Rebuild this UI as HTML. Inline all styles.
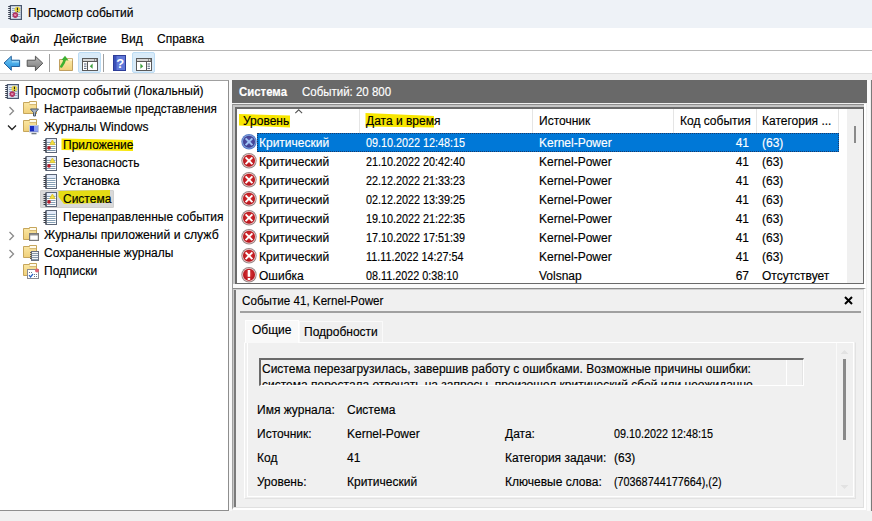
<!DOCTYPE html>
<html><head><meta charset="utf-8">
<style>
*{margin:0;padding:0;box-sizing:border-box}
html,body{width:872px;height:521px;overflow:hidden;background:#f0f0f0;font-family:"Liberation Sans",sans-serif;font-size:12px;color:#000}
.t,.r span{-webkit-text-stroke:0.15px currentColor}
.a{position:absolute}
.t{position:absolute;white-space:nowrap;line-height:18px;height:18px}
.r{position:absolute;left:0;width:872px;height:19px}
.r span{position:absolute;top:1px;line-height:19px;white-space:nowrap}
.d{display:inline-block;transform:scaleX(0.9);transform-origin:0 0}
svg.a{overflow:visible}
</style></head><body>
<svg width="0" height="0" style="position:absolute">
<defs>
<linearGradient id="gfold" x1="0" y1="0" x2="0" y2="1"><stop offset="0" stop-color="#fbe8a6"/><stop offset="1" stop-color="#f0d07a"/></linearGradient>
<radialGradient id="gred" cx="0.5" cy="0.45" r="0.55"><stop offset="0" stop-color="#e23a3a"/><stop offset="1" stop-color="#b01018"/></radialGradient>
<radialGradient id="gblu" cx="0.5" cy="0.45" r="0.55"><stop offset="0" stop-color="#5a58b0"/><stop offset="1" stop-color="#3a3c8c"/></radialGradient>
<linearGradient id="gback" x1="0" y1="0" x2="0" y2="1"><stop offset="0" stop-color="#7cd0f8"/><stop offset="1" stop-color="#1c8ad8"/></linearGradient>
<linearGradient id="gfwd" x1="0" y1="0" x2="0" y2="1"><stop offset="0" stop-color="#b8b8b8"/><stop offset="1" stop-color="#7a7a7a"/></linearGradient>
<g id="icrit"><circle cx="8" cy="7.7" r="7.7" fill="#9a8888"/><circle cx="8" cy="7.7" r="6.8" fill="#f2cccc"/><circle cx="8" cy="7.7" r="6" fill="url(#gred)"/><path d="M4.6 4.3L11.4 11.1M11.4 4.3L4.6 11.1" stroke="#fff" stroke-width="1.9"/></g>
<g id="isel"><circle cx="8" cy="7.7" r="7.7" fill="#5a7ec8"/><circle cx="8" cy="7.7" r="6.8" fill="#86a6e0"/><circle cx="8" cy="7.7" r="6" fill="url(#gblu)"/><path d="M4.6 4.3L11.4 11.1M11.4 4.3L4.6 11.1" stroke="#a0c6f6" stroke-width="1.9"/></g>
<g id="ierr"><circle cx="8" cy="7.8" r="7.7" fill="#9a8888"/><circle cx="8" cy="7.8" r="6.8" fill="#f2cccc"/><circle cx="8" cy="7.8" r="6" fill="url(#gred)"/><rect x="6.7" y="3" width="2.5" height="6.8" fill="#fff"/><rect x="6.7" y="11" width="2.5" height="2" fill="#fff"/></g>
<g id="ilog"><rect x="3" y="0.5" width="10.5" height="14" fill="#fff" stroke="#5c6678"/><rect x="3.5" y="1" width="9.5" height="3" fill="#e2eaf8"/><path d="M4 4.5H12.5M4 6.5H12.5M4 8.5H12.5M4 10.5H12.5M4 12.5H12.5" stroke="#86a0b6"/><path d="M0.5 2.5H3M0.5 4.5H3M0.5 6.5H3M0.5 8.5H3M0.5 10.5H3M0.5 12.5H3" stroke="#3c3f46"/><path d="M3 1V14.5" stroke="#3c4250" stroke-width="1.2"/></g>
<g id="ilogw"><use href="#ilog"/><path d="M9.4 2L12 6.6H6.8Z" fill="#f2e040" stroke="#e0c428" stroke-width="0.8" stroke-linejoin="round"/><circle cx="6" cy="9.9" r="1.8" fill="#b81c2a"/></g>
<g id="iroot"><rect x="2.4" y="0.6" width="11" height="13.8" fill="#dfe8f5" stroke="#4a5870" stroke-width="1.2"/><path d="M4 3.5H12.5M4 5.5H12.5M4 7.5H12.5M4 9.5H12.5M4 11.5H12.5" stroke="#98acc8"/><path d="M0.2 1.5H2.4M0.2 3.5H2.4M0.2 5.5H2.4M0.2 7.5H2.4M0.2 9.5H2.4M0.2 11.5H2.4M0.2 13.5H2.4" stroke="#3a4050"/><circle cx="9.4" cy="4.6" r="2.9" fill="#e8d448"/><rect x="8.9" y="2.7" width="1.1" height="2.6" fill="#222"/><rect x="8.9" y="6" width="1.1" height="0.9" fill="#222"/><circle cx="7.3" cy="10.1" r="2.8" fill="#b03462"/><path d="M6.3 9.1L8.3 11.1M8.3 9.1L6.3 11.1" stroke="#f4a8c8" stroke-width="0.9"/></g>
<g id="ifold"><path d="M1.5 2.5H7.5V1.5H14.5V13.5H1.5Z" fill="url(#gfold)" stroke="#c6a65c"/><rect x="8" y="2" width="6" height="2.4" fill="#fffbec"/><path d="M7.5 4.6H14.2" stroke="#c6a65c" stroke-width="0.8"/></g>
</defs>
</svg>

<!-- title bar -->
<div class="a" style="left:0;top:0;width:872px;height:28px;background:#eef2f7"></div>
<svg class="a" style="left:8px;top:5px" width="15" height="15"><use href="#iroot"/></svg>
<div class="t" style="left:28px;top:4px">Просмотр событий</div>

<!-- menu bar -->
<div class="a" style="left:0;top:28px;width:872px;height:22px;background:#fff"></div>
<div class="a" style="left:0;top:50px;width:872px;height:1px;background:#b8b8b8"></div>
<div class="t" style="left:10px;top:30px">Файл</div>
<div class="t" style="left:54px;top:30px">Действие</div>
<div class="t" style="left:121px;top:30px">Вид</div>
<div class="t" style="left:157px;top:30px">Справка</div>

<!-- toolbar -->
<div class="a" style="left:0;top:51px;width:872px;height:22px;background:#fff"></div>
<div class="a" style="left:0;top:73px;width:872px;height:1px;background:#dedede"></div>
<svg class="a" style="left:0;top:53px" width="22" height="20"><path d="M4 10L11.3 3.2V7.2H19.6V13.5H11.3V17.3Z" fill="url(#gback)" stroke="#24609c" stroke-width="1" stroke-linejoin="round"/><path d="M12 8H19V9.5H12Z" fill="#a8e0fc" opacity="0.7"/></svg>
<svg class="a" style="left:24px;top:53px" width="22" height="20"><path d="M18.8 10.2L11.4 3.2V7.2H3.2V13.3H11.4V17.7Z" fill="url(#gfwd)" stroke="#555" stroke-width="1" stroke-linejoin="round"/></svg>
<div class="a" style="left:49px;top:54px;width:1px;height:18px;background:#a0a0a0"></div>
<svg class="a" style="left:55px;top:52px" width="22" height="22"><path d="M4.5 7.5H17.5V18.5H4.5Z" fill="url(#gfold)" stroke="#c0a060"/><path d="M11 7.5V6.5H17.5V9" fill="#fdf6d8" stroke="#c0a060" stroke-width="0.8"/><path d="M6.3 14.5C7.8 12.5 9.3 10.5 9.8 7.5" stroke="#3cb030" stroke-width="2.6" fill="none" stroke-linecap="round"/><path d="M6.5 8L10 3.8L13.5 8.5Z" fill="#3cb030"/></svg>
<div class="a" style="left:78px;top:52px;width:23px;height:21px;background:#d9ebf9;border:1px solid #bcdcf4;border-radius:2px"></div>
<svg class="a" style="left:82px;top:58px" width="16" height="13"><rect x="0.5" y="0.5" width="15" height="12" fill="#fff" stroke="#5a5a5a"/><rect x="1" y="1" width="14" height="2" fill="#d4d4d4"/><path d="M1 3.5H15" stroke="#5a5a5a"/><path d="M12 2H13M14 2H15" stroke="#444"/><path d="M2 6H4.5M2 8.2H4.5M2 10.4H4.5" stroke="#50607a"/><path d="M5.5 4V12.5" stroke="#5a5a5a"/><path d="M10.6 5.6L7.8 8.2L10.6 10.8Z" fill="#40a040"/></svg>
<div class="a" style="left:103px;top:54px;width:1px;height:18px;background:#a0a0a0"></div>
<svg class="a" style="left:113px;top:55px" width="13" height="16"><rect x="0" y="0" width="13" height="16" fill="#2c3c98"/><rect x="1" y="1" width="11" height="14" fill="#6078d8"/><rect x="1" y="1" width="2.5" height="14" fill="#3a50b8"/><text x="7.3" y="13" font-family="Liberation Sans" font-weight="bold" font-size="13" fill="#fff" text-anchor="middle">?</text></svg>
<div class="a" style="left:132px;top:52px;width:23px;height:21px;background:#d9ebf9;border:1px solid #bcdcf4;border-radius:2px"></div>
<svg class="a" style="left:136px;top:58px" width="16" height="13"><rect x="0.5" y="0.5" width="15" height="12" fill="#fff" stroke="#5a5a5a"/><rect x="1" y="1" width="14" height="2" fill="#d4d4d4"/><path d="M1 3.5H15" stroke="#5a5a5a"/><path d="M12 2H13M14 2H15" stroke="#444"/><path d="M11.5 6H14M11.5 8.2H14M11.5 10.4H14" stroke="#50607a"/><path d="M10.5 4V12.5" stroke="#5a5a5a"/><path d="M4.4 5.6L7.2 8.2L4.4 10.8Z" fill="#40a040"/></svg>

<!-- left tree pane -->
<div class="a" style="left:0;top:80px;width:229px;height:431px;background:#fff;border-top:1px solid #a0a0a0;border-right:1px solid #8e8e8e;border-bottom:1px solid #8e8e8e"></div>
<svg class="a" style="left:5px;top:84px" width="15" height="15"><use href="#iroot"/></svg>
<div class="t" style="left:25px;top:82px">Просмотр событий (Локальный)</div>

<svg class="a" style="left:8px;top:106px" width="8" height="10"><path d="M1.5 1L5.5 5L1.5 9" stroke="#8a8a8a" stroke-width="1.3" fill="none"/></svg>
<svg class="a" style="left:22px;top:100px" width="18" height="18"><use href="#ifold"/><path d="M8.5 9H16.5L13.5 12.5V16H11.5V12.5Z" fill="#a8b4c4" stroke="#4a586a"/></svg>
<div class="t" style="left:44px;top:100px;transform:scaleX(0.973);transform-origin:0 0">Настраиваемые представления</div>

<svg class="a" style="left:7px;top:124px" width="10" height="8"><path d="M1 1.5L5 5.5L9 1.5" stroke="#222" stroke-width="1.3" fill="none"/></svg>
<svg class="a" style="left:22px;top:118px" width="18" height="18"><use href="#ifold"/><rect x="7.5" y="7.5" width="9" height="6.5" fill="#1a2cc0" stroke="#c0c8d8"/><path d="M12 8H16V13.5H12Z" fill="#8ca0f0"/><path d="M9.5 15.6H14.5" stroke="#707880" stroke-width="1.4"/></svg>
<div class="t" style="left:44px;top:118px">Журналы Windows</div>

<svg class="a" style="left:0;top:0" width="1" height="1"><path d="M61.5 138.5L133 140V151L61.5 150Z" fill="#f8e600"/></svg>
<svg class="a" style="left:43px;top:138px" width="15" height="15"><use href="#ilogw"/></svg>
<div class="t" style="left:63px;top:136px">Приложение</div>
<svg class="a" style="left:43px;top:156px" width="15" height="15"><use href="#ilogw"/></svg>
<div class="t" style="left:63px;top:154px">Безопасность</div>
<svg class="a" style="left:43px;top:174px" width="15" height="15"><use href="#ilog"/></svg>
<div class="t" style="left:63px;top:172px">Установка</div>
<div class="a" style="left:40px;top:190px;width:74px;height:18px;background:#d9d9d9;border:1px solid #d0d0d0;border-radius:1px"></div>
<svg class="a" style="left:0;top:0" width="1" height="1"><path d="M58.5 191L110 190V202.5L64 204L58.5 197Z" fill="#e4dc14"/></svg>
<svg class="a" style="left:43px;top:192px" width="15" height="15"><use href="#ilogw"/></svg>
<div class="t" style="left:63px;top:190px">Система</div>
<svg class="a" style="left:43px;top:210px" width="15" height="15"><use href="#ilog"/></svg>
<div class="t" style="left:63px;top:208px">Перенаправленные события</div>

<svg class="a" style="left:8px;top:231px" width="8" height="10"><path d="M1.5 1L5.5 5L1.5 9" stroke="#8a8a8a" stroke-width="1.3" fill="none"/></svg>
<svg class="a" style="left:22px;top:226px" width="18" height="18"><use href="#ifold"/><rect x="7.6" y="7.6" width="8.8" height="6.8" fill="#fff" stroke="#7a7a7a" stroke-width="1.2"/><path d="M8 8.8H16" stroke="#7a7a7a" stroke-width="1.2"/></svg>
<div class="t" style="left:44px;top:226px;transform:scaleX(1.018);transform-origin:0 0">Журналы приложений и служб</div>
<svg class="a" style="left:8px;top:249px" width="8" height="10"><path d="M1.5 1L5.5 5L1.5 9" stroke="#8a8a8a" stroke-width="1.3" fill="none"/></svg>
<svg class="a" style="left:22px;top:244px" width="18" height="18"><use href="#ifold"/><rect x="9.5" y="7.5" width="7" height="9" fill="#f4f6f8" stroke="#6a7080"/><path d="M10 9.5H16M10 11.5H16M10 13.5H16M10 15.5H16" stroke="#8c9cac"/><path d="M8 8.5H9.5M8 10.5H9.5M8 12.5H9.5M8 14.5H9.5" stroke="#555"/></svg>
<div class="t" style="left:44px;top:244px">Сохраненные журналы</div>
<svg class="a" style="left:22px;top:262px" width="18" height="18"><use href="#ifold"/><rect x="5.5" y="7.5" width="11" height="9" fill="#fff" stroke="#8a8a90"/><circle cx="15" cy="8.6" r="2" fill="#e06070"/><path d="M7 10.5H8M9 10.5H10M12 12.5H13M14 12.5H15M12 14.5H13M14 14.5H15" stroke="#6a7a90"/><path d="M7 13L8.5 15L11 12" stroke="#2a60c0" stroke-width="1.2" fill="none"/></svg>
<div class="t" style="left:44px;top:262px">Подписки</div>

<div class="a" style="left:229px;top:80px;width:3px;height:431px;background:#f8f8f8"></div>
<!-- dark header -->
<div class="a" style="left:232px;top:80px;width:635px;height:23px;background:#696969"></div>
<div class="t" style="left:239px;top:83px;color:#fff;font-weight:bold;transform:scaleX(0.95);transform-origin:0 0">Система</div>
<div class="t" style="left:302px;top:83px;color:#fff;transform:scaleX(0.957);transform-origin:0 0">Событий: 20 800</div>

<!-- list panel -->
<div class="a" style="left:232px;top:104px;width:634px;height:184px;background:#fbfbfb;border-left:1px solid #9a9a9a;border-top:1px solid #8e8e8e"></div>
<div class="a" style="left:233px;top:105px;width:633px;height:179px;border-left:2px solid #c8c8c8;border-top:2px solid #c4c4c4"></div>
<div class="a" style="left:235px;top:107px;width:629px;height:177px;background:#fff;border-style:solid;border-color:#6a6a6a;border-width:2px 1px 1px 2px"></div>
<div class="a" style="left:864px;top:104px;width:2px;height:184px;background:#fff"></div>
<div class="a" style="left:847px;top:109px;width:16px;height:174px;background:#f0f0f0"></div>
<div class="a" style="left:854px;top:126px;width:2px;height:17px;background:#8a8a8a"></div>
<div class="a" style="left:0;top:0;width:872px;height:521px;clip-path:inset(109px 25px 238px 236px)">
<div class="a" style="left:359px;top:109px;width:1px;height:24px;background:#e5e5e5"></div>
<div class="a" style="left:532px;top:109px;width:1px;height:24px;background:#e5e5e5"></div>
<div class="a" style="left:673px;top:109px;width:1px;height:24px;background:#e5e5e5"></div>
<div class="a" style="left:756px;top:109px;width:1px;height:24px;background:#e5e5e5"></div>
<div class="a" style="left:838px;top:109px;width:1px;height:24px;background:#e5e5e5"></div>
<svg class="a" style="left:295px;top:109px" width="8" height="5"><path d="M0.3 4.2L3.7 0.8L7.1 4.2" stroke="#555" stroke-width="1.1" fill="none"/></svg>
<svg class="a" style="left:0;top:0" width="1" height="1"><path d="M239 114L290 115.5V127.5L239 125.5Z" fill="#f8e600"/></svg>
<svg class="a" style="left:0;top:0" width="1" height="1"><path d="M365.5 113L434 116V127.5L365.5 126.5Z" fill="#f8e600"/></svg>
<div class="t" style="left:243px;top:112px">Уровень</div>
<div class="t" style="left:366px;top:112px">Дата и время</div>
<div class="t" style="left:539px;top:112px">Источник</div>
<div class="t" style="left:680px;top:112px">Код события</div>
<div class="t" style="left:762px;top:112px">Категория ...</div>

<div class="a" style="left:257px;top:133px;width:582px;height:19px;background:#0078d7;outline:1px dotted #1a3a6a;outline-offset:-1px"></div>
<svg class="a" style="left:241px;top:134px" width="16" height="16"><use href="#isel"/></svg>
<div class="r" style="top:133px;color:#fff"><span style="left:259px">Критический</span><span class="d" style="left:366px">09.10.2022 12:48:15</span><span style="left:539px">Kernel-Power</span><span style="left:700px;width:49px;text-align:right">41</span><span style="left:762px">(63)</span></div>
<svg class="a" style="left:241px;top:153px" width="16" height="16"><use href="#icrit"/></svg>
<div class="r" style="top:152px;color:#000"><span style="left:259px">Критический</span><span class="d" style="left:366px">21.10.2022 20:42:40</span><span style="left:539px">Kernel-Power</span><span style="left:700px;width:49px;text-align:right">41</span><span style="left:762px">(63)</span></div>
<svg class="a" style="left:241px;top:172px" width="16" height="16"><use href="#icrit"/></svg>
<div class="r" style="top:171px;color:#000"><span style="left:259px">Критический</span><span class="d" style="left:366px">22.12.2022 21:33:23</span><span style="left:539px">Kernel-Power</span><span style="left:700px;width:49px;text-align:right">41</span><span style="left:762px">(63)</span></div>
<svg class="a" style="left:241px;top:191px" width="16" height="16"><use href="#icrit"/></svg>
<div class="r" style="top:190px;color:#000"><span style="left:259px">Критический</span><span class="d" style="left:366px">02.12.2022 13:39:25</span><span style="left:539px">Kernel-Power</span><span style="left:700px;width:49px;text-align:right">41</span><span style="left:762px">(63)</span></div>
<svg class="a" style="left:241px;top:210px" width="16" height="16"><use href="#icrit"/></svg>
<div class="r" style="top:209px;color:#000"><span style="left:259px">Критический</span><span class="d" style="left:366px">19.10.2022 21:22:35</span><span style="left:539px">Kernel-Power</span><span style="left:700px;width:49px;text-align:right">41</span><span style="left:762px">(63)</span></div>
<svg class="a" style="left:241px;top:229px" width="16" height="16"><use href="#icrit"/></svg>
<div class="r" style="top:228px;color:#000"><span style="left:259px">Критический</span><span class="d" style="left:366px">17.10.2022 17:51:39</span><span style="left:539px">Kernel-Power</span><span style="left:700px;width:49px;text-align:right">41</span><span style="left:762px">(63)</span></div>
<svg class="a" style="left:241px;top:248px" width="16" height="16"><use href="#icrit"/></svg>
<div class="r" style="top:247px;color:#000"><span style="left:259px">Критический</span><span class="d" style="left:366px">11.11.2022 14:27:54</span><span style="left:539px">Kernel-Power</span><span style="left:700px;width:49px;text-align:right">41</span><span style="left:762px">(63)</span></div>
<svg class="a" style="left:241px;top:267px" width="16" height="16"><use href="#ierr"/></svg>
<div class="r" style="top:266px;color:#000"><span style="left:259px">Ошибка</span><span class="d" style="left:366px">08.11.2022 0:38:10</span><span style="left:539px">Volsnap</span><span style="left:700px;width:49px;text-align:right">67</span><span style="left:762px">Отсутствует</span></div>
</div>

<!-- details panel -->
<div class="a" style="left:232px;top:288px;width:634px;height:222px;background:#f0f0f0;border-left:1px solid #a0a0a0;border-top:1px solid #8a8a8a;border-right:2px solid #fff;border-bottom:2px solid #fff"></div>
<div class="a" style="left:233px;top:289px;width:631px;height:219px;border-left:1px solid #c8c8c8;border-top:1px solid #d0d0d0;border-right:1px solid #e0e0e0;border-bottom:1px solid #e0e0e0"></div>
<div class="a" style="left:234px;top:290px;width:2px;height:217px;background:#7a7a7a"></div>
<div class="t" style="left:242px;top:292px;transform:scaleX(0.97);transform-origin:0 0">Событие 41, Kernel-Power</div>
<svg class="a" style="left:844px;top:296px" width="9" height="9"><path d="M1 1L8 8M8 1L1 8" stroke="#000" stroke-width="2"/></svg>
<div class="a" style="left:240px;top:311px;width:621px;height:2px;background:#a0a0a0"></div>

<!-- tab panel -->
<div class="a" style="left:244px;top:342px;width:612px;height:157px;border-style:solid;border-color:transparent #e2e2e2 #e2e2e2 #fff;border-width:1px"></div>
<div class="a" style="left:247px;top:342px;width:607px;height:155px;border:1px solid #fff;background:#f0f0f0"></div>
<div class="a" style="left:299px;top:321px;width:84px;height:21px;background:#f0f0f0;border:1px solid #fafafa;border-bottom:none"></div>
<div class="a" style="left:245px;top:320px;width:54px;height:23px;background:#f9f9f9;border:1px solid #fff;border-bottom:none"></div>
<div class="t" style="left:252px;top:321px">Общие</div>
<div class="t" style="left:304px;top:323px">Подробности</div>

<!-- textbox -->
<div class="a" style="left:259px;top:358px;width:545px;height:28px;border-top:2px solid #6a6a6a;border-left:2px solid #6a6a6a;border-right:1px solid #fff;border-bottom:1px solid #fff;overflow:hidden">
<div class="a" style="left:525px;top:0;width:1px;height:28px;background:#fff"></div><div class="a" style="left:541px;top:0;width:1px;height:28px;background:#e4e4e4"></div>
<div class="t" style="left:1px;top:1px;line-height:16px">Система перезагрузилась, завершив работу с ошибками. Возможные причины ошибки:</div>
<div class="t" style="left:1px;top:17px;line-height:16px">система перестала отвечать на запросы, произошел критический сбой или неожиданно</div>
</div>

<!-- scrollbar of details -->
<div class="a" style="left:836px;top:343px;width:17px;height:153px;border-left:1px solid #fafafa"></div>
<div class="a" style="left:843px;top:359px;width:3px;height:81px;background:#8a8a8a"></div>
<svg class="a" style="left:840px;top:349px" width="9" height="6"><path d="M0.5 5L4.5 1L8.5 5Z" fill="#e2e2e2"/></svg>
<svg class="a" style="left:840px;top:484px" width="9" height="6"><path d="M0.5 1L4.5 5L8.5 1Z" fill="#e2e2e2"/></svg>

<div class="t" style="left:257px;top:401px">Имя журнала:</div>
<div class="t" style="left:347px;top:401px">Система</div>
<div class="t" style="left:257px;top:425px">Источник:</div>
<div class="t" style="left:347px;top:425px">Kernel-Power</div>
<div class="t" style="left:505px;top:425px">Дата:</div>
<div class="t d" style="left:614px;top:425px">09.10.2022 12:48:15</div>
<div class="t" style="left:257px;top:449px">Код</div>
<div class="t" style="left:347px;top:449px">41</div>
<div class="t" style="left:505px;top:449px">Категория задачи:</div>
<div class="t" style="left:614px;top:449px">(63)</div>
<div class="t" style="left:257px;top:473px">Уровень:</div>
<div class="t" style="left:347px;top:473px">Критический</div>
<div class="t" style="left:505px;top:473px">Ключевые слова:</div>
<div class="t d" style="left:614px;top:473px">(70368744177664),(2)</div>

<!-- right edge -->
<div class="a" style="left:867px;top:80px;width:3px;height:431px;background:#fbfbfb"></div>
<div class="a" style="left:871px;top:80px;width:1px;height:431px;background:#7a7a7a"></div>
</body></html>
